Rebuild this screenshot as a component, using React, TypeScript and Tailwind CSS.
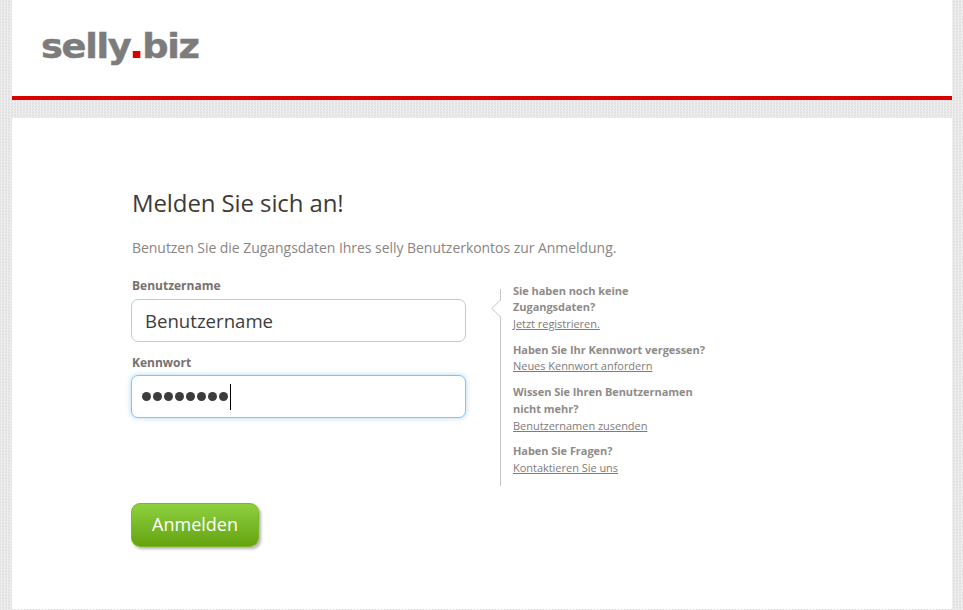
const font = "font-['Open_Sans',sans-serif]";

function HelpBlock({ lines, link, className }: { lines: string[]; link: string; className?: string }) {
  return (
    <div className={className}>
      {lines.map((l) => (
        <p key={l} className="text-[11px] leading-[16.7px] font-bold tracking-[-0.05px] text-[#8f8b89]">
          {l}
        </p>
      ))}
      <a className="block text-[11px] leading-[16.7px] tracking-[-0.03px] text-[#7f7b79] underline">{link}</a>
    </div>
  );
}

export default function App() {
  return (
    <div
      className={`${font} h-[610px] w-[963px] overflow-hidden bg-[#e6e6e6] bg-[repeating-conic-gradient(#eeeeee_0_25%,#e0e0e0_0_50%)] bg-[length:3px_3px] pl-3 pr-[11px]`}
    >
      <header className="flex h-[100px] items-start border-b-4 border-[#d90000] bg-white pl-[29px] pt-[23px]">
        <div className="flex origin-left scale-x-[1.08] items-baseline font-['DejaVu_Sans',sans-serif] text-[34px] leading-[46px] font-bold tracking-[-1.2px] text-[#7c7c7c] [-webkit-text-stroke:0.5px_#7c7c7c]">
          selly
          <span className="mx-[2px] inline-block size-[7px] bg-[#d90000]" />
          biz
        </div>
      </header>

      <main className="mt-[18px] h-[491px] bg-white pl-[119px] pt-[68px]">
        <h1 className="pl-px text-[24px] leading-[33px] tracking-[-0.1px] text-[#3f3a38]">Melden Sie sich an!</h1>
        <p className="mt-[19px] pl-px text-[14px] leading-[19px] tracking-[-0.045px] text-[#8a8583]">
          Benutzen Sie die Zugangsdaten Ihres selly Benutzerkontos zur Anmeldung.
        </p>

        <div className="mt-[20px] flex">
          <div className="w-[335px]">
            <label className="block pl-px text-[12px] leading-[17px] font-bold text-[#767170]">Benutzername</label>
            <div className="mt-[5px] flex h-[43px] items-center rounded-[7px] border border-[#c9c9c9] bg-white pl-[13px] text-[18.6px] text-[#3c3c3c]">
              Benutzername
            </div>
            <label className="mt-[12px] block pl-px text-[12px] leading-[17px] font-bold text-[#767170]">Kennwort</label>
            <div className="mt-[4px] flex h-[43px] items-center gap-[2px] rounded-[7px] border border-[#8cc1ee] bg-white pl-[10px] shadow-[0_0_5px_rgba(100,170,235,0.5)]">
              {[0, 1, 2, 3, 4, 5, 6, 7].map((i) => (
                <span key={i} className="size-[9px] rounded-full bg-[#3c3c3c]" />
              ))}
              <span className="h-[26px] w-px bg-black" />
            </div>
          </div>

          <aside className="relative mt-[12px] ml-[34px] h-[197px] border-l border-[#c4c4c4] pl-[12px]">
            <svg className="absolute top-[10px] -left-[10px]" width="10" height="19" viewBox="0 0 10 19">
              <path d="M10 0.5 L0.8 9.5 L10 18.5" fill="#fff" stroke="#c4c4c4" />
            </svg>
            <div className="-mt-[6.4px]">
              <HelpBlock lines={["Sie haben noch keine", "Zugangsdaten?"]} link="Jetzt registrieren." />
              <HelpBlock className="mt-[9px]" lines={["Haben Sie Ihr Kennwort vergessen?"]} link="Neues Kennwort anfordern" />
              <HelpBlock className="mt-[9px]" lines={["Wissen Sie Ihren Benutzernamen", "nicht mehr?"]} link="Benutzernamen zusenden" />
              <HelpBlock className="mt-[9px]" lines={["Haben Sie Fragen?"]} link="Kontaktieren Sie uns" />
            </div>
          </aside>
        </div>

        <button className="mt-[17px] h-[44px] w-[128px] rounded-[9px] border border-[#7fb32c] bg-gradient-to-b from-[#8ed13c] to-[#65a30d] pb-[2px] text-[18px] text-white shadow-[2px_2px_3px_rgba(0,0,0,0.3)]">
          Anmelden
        </button>
      </main>
    </div>
  );
}
